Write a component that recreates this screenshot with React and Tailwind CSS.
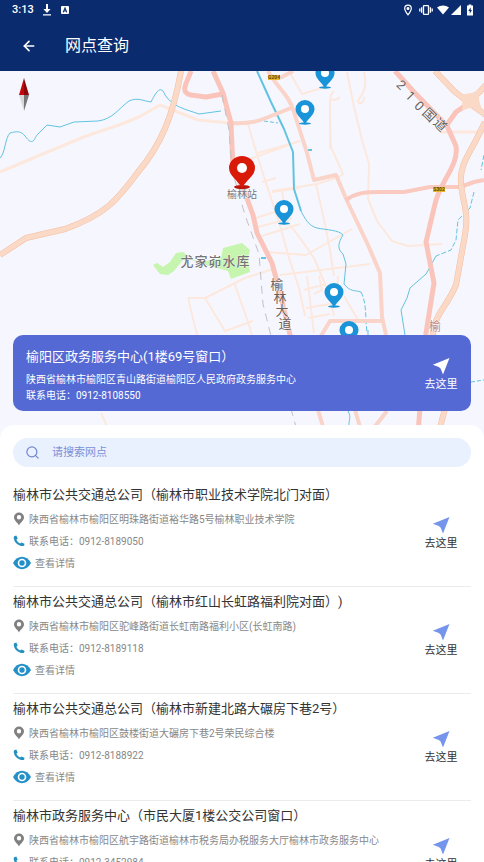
import { ArrowLeft, Search } from 'lucide-react';

const branches = [
  {
    name: '榆林市公共交通总公司（榆林市职业技术学院北门对面）',
    address: '陕西省榆林市榆阳区明珠路街道裕华路5号榆林职业技术学院',
    phone: '0912-8189050',
  },
  {
    name: '榆林市公共交通总公司（榆林市红山长虹路福利院对面）)',
    address: '陕西省榆林市榆阳区驼峰路街道长虹南路福利小区(长虹南路)',
    phone: '0912-8189118',
  },
  {
    name: '榆林市公共交通总公司（榆林市新建北路大碾房下巷2号）',
    address: '陕西省榆林市榆阳区鼓楼街道大碾房下巷2号荣民综合楼',
    phone: '0912-8188922',
  },
  {
    name: '榆林市政务服务中心（市民大厦1楼公交公司窗口）',
    address: '陕西省榆林市榆阳区航宇路街道榆林市税务局办税服务大厅榆林市政务服务中心',
    phone: '0912-3452984',
  },
];

function StatusBar() {
  return (
    <div className="flex h-5 items-center justify-between pl-3 pr-2 text-white">
      <div className="flex items-center gap-2">
        <span className="text-[11px] font-medium">3:13</span>
        <svg viewBox="0 0 10 12" className="h-3 w-2.5" fill="currentColor">
          <path d="M4 0h2v5h2.6L5 9 1.4 5H4zM1 10.3h8v1.2H1z" />
        </svg>
        <svg viewBox="0 0 10 10" className="size-2.5">
          <rect x="1" y="1" width="8" height="8" rx="1" fill="#fff" />
          <path d="M3.2 7.4 5 3l1.8 4.4M3.9 6h2.2" stroke="#0a2b6e" strokeWidth="1.1" fill="none" />
        </svg>
      </div>
      <div className="flex items-center">
        <svg viewBox="0 0 10 12" className="mr-1.5 h-3 w-2.5" fill="none" stroke="currentColor" strokeWidth="1.2">
          <path d="M5 10.8C3 8.3 1.7 6.4 1.7 4.500a3.3 3.3 0 0 1 6.6 0C8.3 6.4 7 8.3 5 10.8z" />
          <circle cx="5" cy="4.5" r="0.9" fill="currentColor" />
        </svg>
        <svg viewBox="0 0 14 12" className="mr-1 h-3 w-3.5" fill="none" stroke="currentColor" strokeWidth="1.3">
          <rect x="4.5" y="1.7" width="5" height="8.6" rx="0.6" />
          <path d="M2.6 3.3v5.4M11.4 3.3v5.4M.8 4.6v2.8M13.2 4.6v2.8" />
        </svg>
        <svg viewBox="0 0 12 10" className="mr-px h-2.5 w-3" fill="currentColor">
          <path d="M6 9.6 0 2.5C3.5-.3 8.5-.3 12 2.5z" />
        </svg>
        <svg viewBox="0 0 12 10" className="mr-1 h-2.5 w-3" fill="currentColor">
          <path d="M11 0v10H1z" />
        </svg>
        <svg viewBox="0 0 8 12" className="mr-0.5 h-3 w-2" fill="currentColor">
          <path d="M2.7 .5h2.6v1H7v10H1v-10h1.7z" />
          <path d="M4.7 3.3 2.3 7h1.5v2.7L6 6H4.7z" fill="#0a2b6e" />
        </svg>
      </div>
    </div>
  );
}

function MapPin({ x, y }) {
  return (
    <g transform={`translate(${x} ${y})`}>
      <ellipse cx="0" cy="23.5" rx="6" ry="1.2" fill="#1994d8" />
      <path fill="#1994d8" d="M0 24C-3.500 18-9.500 15-9.500 9a9.500 9 0 0 1 19 0C9.500 15 3.500 18 0 24z" />
      <circle cy="9" r="4" fill="#fff" />
    </g>
  );
}

function MapCanvas() {
  return (
    <svg viewBox="0 71 484 368" preserveAspectRatio="xMidYMin slice" className="absolute inset-0 h-full w-full" fill="none" role="img" aria-label="地图">
      <rect y="71" width="484" height="368" fill="#f6f7fe" />

      <path fill="#c5f5ae" d="M153 265l4-2 6 4 7-5 6-9 7-1 5 4-6 5-8 10-6 4-8-1zM184 257l17 5 20-4 2-10 19-5 8 7-2 9 2 13-19 7-3-8-26-7z" />

      {/* minor streets */}
      <g stroke="#fde8dd" strokeWidth="2" strokeLinejoin="round">
        <path strokeWidth="3" d="M160 105l-21 12-20 8-33 11-36 15-50 21M160 105l38 15 32 3M440 132H484" />
        <path d="M248 124l7 24 10 32 14 42 10 36 10 30 6 28" />
        <path d="M258 153l42-12M250 159l50-18M262 182l14-4M272 191l45-7 22-7M300 188l-28 4M282 190l4 30 14 18 14 20 14 33 6 25" />
        <path d="M316 184l9 40 5 26 4 26M339 177l4-3-12-27-1-30M330 99l0 50M347 72l7 35 8 33 7 24-1 35 9 22 15 20 16 5 34-2" />
        <path d="M364 72c3 12 1 20-5 27-4 6 6 6 5-2M290 73l12 21 20-6 8-15M334 91c-8 8-1 12 6 6" />
        <path d="M256 218l28-9M258 227l34-9M262 236l38-12M266 252l40 3 46-26M280 275l90-11M307 276l7 57M304 290l22-6M306 308l30-5M308 318l22-4M319 276l3 14-8 4M338 276l-1 16M344 296l14 24" />
        <path d="M188 298l17 0 40-20 28-9M188 298l9 37M205 298l20 33 28-10M234 282l14 40 6 20M196 340l5 40 4 30M101 413l6 13" />
      </g>

      {/* rivers */}
      <g stroke="#62c3e0" strokeLinejoin="round">
        <path d="M0 158c5-4 5-20 10-25 7-2 11-2 15 3 8 11 9 3 12-1l10-10 13 2 14-5 24-1c15-2 20-12 31-20 9-4 14 0 22 1 5-10 10-18 14-7 8 12 20 14 34 19l22-3" />
        <path strokeWidth="2" d="M257 71l14 31 13 27 9 23 1 37 7 22" />
        <path d="M301 211c4 8 8 15 16 17 10 2 22 2 26 7-5 8-6 14 0 19l3 10-2 20c6 8 11 6 17 8" />
        <path strokeDasharray="5 2" d="M361 292c6 12 4 24 6 41M368 330v22M484 155l-3 15M474 192l-4 16-12 12-2 20-5 10-15 6" />
        <path d="M436 256l-10 18-16 14-3 10-6 12 4 25M348 411c4 7 0 10 1 16" />
        <path strokeDasharray="4 2" d="M471 382l13-2M264 121l14 2" />
        <path d="M308 150h4M261 258h5" strokeWidth="2" />
      </g>

      {/* secondary roads */}
      <g stroke="#fad3c9" strokeWidth="4" strokeLinejoin="round">
        <path d="M231 123c20 1 28-2 40-7l20-8" />
        <path d="M268 71c10 18 20 22 26 41l13 41 7 27 22-5 12 28 20 42 12 28 2 44 4 18" />
        <path stroke="#fac9c0" d="M346 200c10-7 18-8 34-8h24l26-5h30l14-5 10-2" />
        <path d="M383 321h-53l-12 20M318 410l6 20M355 410l6 20M387 411l-14 18M280 78l13-7" />
      </g>

      {/* trunk roads */}
      <g strokeLinejoin="round" strokeWidth="5">
        <path stroke="#fac4bb" d="M213 71l10 22 8 30 2 45 12 25 8 22 4 18 15 30 8 30 12 50M191 71c-4 12-12 21 0 24l15 2 17-3" />
        <path stroke="#fac4bb" d="M395 71l19 21 33 34 9 20c3 20-16 35-21 58l-9 38 8 41-8 50-8 100" />
        <path stroke="#fac4bb" d="M446 126l10-14 13-9" />
        <path stroke="#f5bd9f" strokeWidth="6" d="M181 71c-8 45-20 74-43 101-22 30-34 43-73 57l-39 9-26 17M435 71l19 20 15 12 17-18M469 103l17 12M485 122l-7 14c-6 14-19 28-17 48 2 20 8 28 4 51l-9 50c-11 26-22 26-24 58M446 405l-8 30" />
        <path stroke="#fbd9c7" strokeWidth="5" d="M181 71c-8 45-20 74-43 101-22 30-34 43-73 57l-39 9-26 17M435 71l19 20 15 12 17-18M469 103l17 12M485 122l-7 14c-6 14-19 28-17 48 2 20 8 28 4 51l-9 50c-11 26-22 26-24 58M446 405l-8 30" />
        <path fill="#fbd9c7" d="M458 93q11 3 22-4-3 10 2 20-10-4-20 2 2-10-4-18z" />
      </g>
      <path stroke="#c2c0c4" strokeDasharray="8 6" d="M222 95l7 35 3 40 13 45 14 39 4 50 10 40 25 90" />

      <g fontSize="5" fontWeight="700" fill="#5b480d" textAnchor="middle">
        <rect x="268" y="75" width="12" height="5" fill="#e8b92e" />
        <text x="274" y="79">G204</text>
        <rect x="433" y="187" width="12" height="5" fill="#e8b92e" />
        <text x="439" y="191">S302</text>
      </g>

      <g fill="#77747a" stroke="#fff" strokeOpacity="0.6" strokeWidth="1" paintOrder="stroke" textAnchor="middle">
        <text x="242" y="198" fontSize="10">榆林站</text>
        <g fontSize="13" fontWeight="500">
          <text x="187" y="266">尤</text>
          <text x="201" y="266">家</text>
          <text x="215" y="266">峁</text>
          <text x="229" y="266">水</text>
          <text x="243" y="266">库</text>
        </g>
        <g fontSize="13" fill="#68605c">
          <text x="277" y="289">榆</text>
          <text x="280" y="302">林</text>
          <text x="282" y="315">大</text>
          <text x="285" y="328">道</text>
        </g>
        <text x="435" y="331" fontSize="12" fill="#c08a88">榆</text>
        <g fontSize="13" fill="#68605c">
          <text transform="translate(398 88) rotate(45)">2</text>
          <text transform="translate(407 99) rotate(45)">1</text>
          <text transform="translate(416 109) rotate(45)">0</text>
          <text transform="translate(426 118) rotate(45)">国</text>
          <text transform="translate(437 128) rotate(45)">道</text>
        </g>
      </g>

      <MapPin x={325} y={64} />
      <MapPin x={305} y={100} />
      <MapPin x={284} y={200} />
      <MapPin x={334} y={283} />
      <MapPin x={349} y={321} />
      <ellipse cx="242" cy="187" rx="8" ry="2" fill="#b81709" />
      <path fill="#da1a08" d="M242 188c-4-8-13-12-13-20a13 12 0 0 1 26 0c0 8-9 12-13 20z" />
      <circle cx="242" cy="168" r="5" fill="#fff" />

      {/* compass needle */}
      <path fill="#c4070d" d="M24 78l-5 17h5z" />
      <path fill="#8d0508" d="M24 78l5 17h-5z" />
      <path fill="#d8d8d8" d="M19 95h5v16z" />
      <path fill="#777" d="M29 95h-5v16z" />
    </svg>
  );
}

function GoButton({ light = false }) {
  return (
    <button type="button" className="flex w-[60px] shrink-0 flex-col items-center">
      <svg viewBox="0 0 18 18" className={light ? 'size-[18px] text-white' : 'size-[18px] text-[#7595ec]'} fill="currentColor">
        <path d="M17.5 1 .8 7.800l6 2.200 1.800 1.400L11 17.500z" />
      </svg>
      <span className={light ? 'text-[11px] leading-5 text-white' : 'text-[11px] leading-5 text-[#333]'}>去这里</span>
    </button>
  );
}

function BranchItem({ branch }) {
  return (
    <li className="mx-[13px] flex items-center justify-between border-b border-[#ececec] pt-[5px] pb-3">
      <div className="min-w-0">
        <h2 className="mb-[3px] whitespace-nowrap text-[13px] leading-5 text-[#333]">{branch.name}</h2>
        <p className="flex h-[22px] items-center gap-1 whitespace-nowrap text-[10px] text-[#888]">
          <svg viewBox="0 0 12 14" className="h-3.5 w-3 shrink-0" fill="#808080">
            <path fillRule="evenodd" d="M6 13.500C4.500 10.500 1 8.500 1 5.300a5 4.800 0 0 1 10 0C11 8.500 7.500 10.500 6 13.500zM6 3a2.200 2.200 0 1 0 0 4.400A2.200 2.200 0 0 0 6 3z" />
          </svg>
          {branch.address}
        </p>
        <p className="flex h-[22px] items-center gap-1 whitespace-nowrap text-[10px] text-[#888]">
          <svg viewBox="0 0 12 12" className="size-3 shrink-0" fill="#2490bf">
            <path d="M1.200 1.200 3.300.6l1.400 3-1.300 1.200c.8 1.700 2 2.900 3.700 3.700l1.300-1.100 3.100 1.300-.3 1.700c-.5.800-2.700.8-4.400.1C3.400 9.100 1.300 6.500.8 3.400.6 2.500.7 1.700 1.200 1.200z" />
          </svg>
          <span>联系电话：{branch.phone}</span>
        </p>
        <button type="button" className="flex h-[22px] items-center gap-1 text-[10px] text-[#888]">
          <svg viewBox="0 0 18 14" className="h-3.5 w-[18px]">
            <path fill="#2490c8" d="M0 7C4.500-1.300 13.500-1.300 18 7c-4.500 8.300-13.500 8.300-18 0z" />
            <circle cx="9" cy="7" r="3.5" fill="none" stroke="#fff" strokeWidth="1.6" />
          </svg>
          查看详情
        </button>
      </div>
      <div className="shrink-0 pt-2.5">
        <GoButton />
      </div>
    </li>
  );
}

export default function App() {
  return (
    <div className="flex h-screen flex-col overflow-hidden bg-white font-[Roboto,'Noto_Sans_CJK_SC',sans-serif] [text-spacing-trim:space-all]">
      <header className="shrink-0 bg-[#0a2b6e] text-white">
        <StatusBar />
        <div className="flex h-[51px] items-center gap-7 pl-[21px]">
          <button type="button" aria-label="返回">
            <ArrowLeft size={16} strokeWidth={2.5} />
          </button>
          <h1 className="text-base">网点查询</h1>
        </div>
      </header>

      <section className="relative shrink-0 px-[13px] pt-[264px] pb-7">
        <MapCanvas />
        <div className="relative flex items-center justify-between rounded-[10px] bg-[#5469d4] pt-3 pb-[7px] pl-[13px] text-white">
          <div>
            <h2 className="mb-[5px] text-[13px] leading-5">榆阳区政务服务中心(1楼69号窗口）</h2>
            <p className="text-[10px] leading-4">陕西省榆林市榆阳区青山路街道榆阳区人民政府政务服务中心</p>
            <p className="text-[10px] leading-4">联系电话：0912-8108550</p>
          </div>
          <GoButton light />
        </div>
      </section>

      <main className="relative -mt-3.5 flex min-h-0 flex-1 flex-col rounded-t-[14px] bg-white pt-[13px]">
        <label className="mx-[13px] flex h-[29px] shrink-0 items-center gap-3 rounded-full bg-[#eaf1fe] px-3">
          <Search size={15} strokeWidth={2} className="text-[#7488cc]" />
          <input
            type="search"
            aria-label="请搜索网点"
            placeholder="请搜索网点"
            className="h-full min-w-0 flex-1 bg-transparent text-[11px] outline-none placeholder:text-[#7c90d6]"
          />
        </label>
        <ul className="mt-[13px] min-h-0 flex-1 overflow-y-auto [scrollbar-width:none]">
          {branches.map(branch => (
            <BranchItem key={branch.phone} branch={branch} />
          ))}
        </ul>
      </main>
    </div>
  );
}
